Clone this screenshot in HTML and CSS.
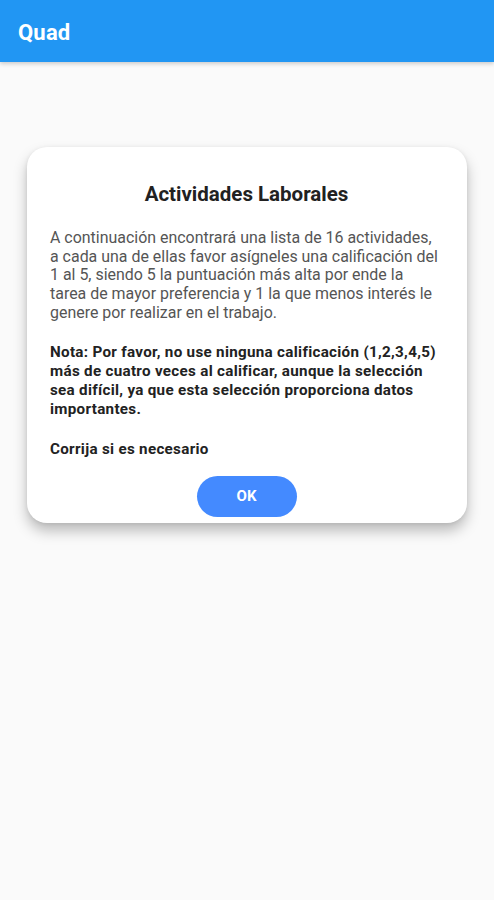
FILE: index.html
```
<!DOCTYPE html>
<html lang="es">
<head>
<meta charset="utf-8">
<title>Quad</title>
<link rel="stylesheet" href="styles.css">
</head>
<body>
<header class="appbar"><span class="appbar-title">Quad</span></header>
<main class="content">
  <section class="dialog">
    <h1 class="dialog-title">Actividades Laborales</h1>
    <p class="dialog-text">A continuación encontrará una lista de 16 actividades, a cada una de ellas favor asígneles una calificación del 1 al 5, siendo 5 la puntuación más alta por ende la tarea de mayor preferencia y 1 la que menos interés le genere por realizar en el trabajo.</p>
    <p class="dialog-note">Nota: Por favor, no use ninguna calificación (1,2,3,4,5) más de cuatro veces al calificar, aunque la selección sea difícil, ya que esta selección proporciona datos importantes.</p>
    <p class="dialog-note dialog-note-last">Corrija si es necesario</p>
    <div class="dialog-actions"><button class="ok-button">OK</button></div>
  </section>
</main>
</body>
</html>
```
FILE: styles.css
```
html, body {
  margin: 0;
  padding: 0;
  background: #fafafa;
  font-family: Roboto, "Liberation Sans", sans-serif;
}
.appbar {
  height: 62px;
  background: #2196f3;
  display: flex;
  align-items: center;
  padding-left: 18px;
  box-shadow: 0 2px 4px rgba(0,0,0,0.18);
  position: relative;
  z-index: 2;
}
.appbar-title {
  color: #fff;
  font-size: 22px;
  font-weight: 700;
  letter-spacing: 0.2px;
  margin-top: 2px;
}
.content {
  padding: 85px 27px 0 27px;
  min-height: 838px;
  box-sizing: border-box;
}
.dialog {
  background: #fff;
  border-radius: 20px;
  box-shadow: 0 8px 14px rgba(0,0,0,0.25), 0 1px 4px rgba(0,0,0,0.08);
  padding: 35px 24px 6px 23px;
}
.dialog-title {
  margin: 0 0 23px 0;
  text-align: center;
  font-size: 20.5px;
  font-weight: 700;
  color: #212121;
  line-height: 24px;
}
.dialog-text {
  margin: 0 0 20px 0;
  font-size: 15.95px;
  line-height: 18.7px;
  color: #555;
}
.dialog-note {
  margin: 0 0 21px 0;
  font-size: 15.2px;
  letter-spacing: 0.3px;
  line-height: 19px;
  font-weight: 700;
  color: #222;
}
.dialog-note-last {
  margin-bottom: 17px;
}
.dialog-actions {
  display: flex;
  justify-content: center;
}
.ok-button {
  width: 100px;
  height: 41px;
  border: none;
  border-radius: 21px;
  background: #448aff;
  color: #fff;
  font-family: Roboto, "Liberation Sans", sans-serif;
  font-size: 15px;
  font-weight: 700;
}
```
